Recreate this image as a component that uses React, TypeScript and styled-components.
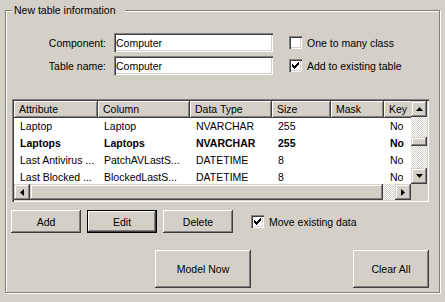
import React from 'react'
import styled, { createGlobalStyle, css } from 'styled-components'

const face = '#d4d0c8'
const shadow = '#808080'
const darkShadow = '#404040'
const highlight = '#ffffff'

const GlobalStyle = createGlobalStyle`
  html, body {
    margin: 0;
    padding: 0;
    background: ${face};
  }

  body {
    font-family: 'Liberation Sans', Arial, sans-serif;
    font-size: 10.5px;
    color: #000;
  }
`

const sunken = css`
  box-shadow: inset 1px 1px 0 ${shadow}, inset 2px 2px 0 ${darkShadow},
    inset -1px -1px 0 ${highlight}, inset -2px -2px 0 ${face};
`

const raised = css`
  box-shadow: inset -1px -1px 0 ${darkShadow}, inset 1px 1px 0 ${highlight},
    inset -2px -2px 0 ${shadow};
`

const scrollRaised = css`
  box-shadow: inset -1px -1px 0 ${darkShadow}, inset 1px 1px 0 ${face},
    inset -2px -2px 0 ${shadow}, inset 2px 2px 0 ${highlight};
`

const hatch = css`
  background: repeating-conic-gradient(${highlight} 0 25%, ${face} 0 50%) 0 0 / 2px 2px;
`

const Window = styled.div`
  width: 445px;
  height: 302px;
  box-sizing: border-box;
  padding: 4px 0 0 5px;
  background: ${face};
`

const GroupBox = styled.fieldset`
  margin: 0;
  padding: 0 0 0 6px;
  width: 435px;
  height: 289px;
  box-sizing: border-box;
  min-inline-size: 0;
  border: 1px solid ${shadow};
  box-shadow: 1px 1px 0 ${highlight}, inset 1px 1px 0 ${highlight};
`

const Caption = styled.legend`
  padding: 0 9px 0 2px;
  line-height: 13px;
  background: ${face};
`

const FormGrid = styled.div`
  display: grid;
  grid-template-columns: 94px 159px auto;
  column-gap: 8px;
  row-gap: 4px;
  align-items: center;
  margin-top: 16px;
`

const FieldLabel = styled.label`
  text-align: right;
`

const TextInput = styled.input`
  width: 159px;
  height: 19px;
  box-sizing: border-box;
  margin: 0;
  padding: 0 2px;
  border: none;
  outline: none;
  background: #fff;
  font: inherit;
  color: #000;
  ${sunken}
`

const CheckRow = styled.label<{ $indent?: number }>`
  display: flex;
  align-items: center;
  gap: 5px;
  margin-left: ${(p) => p.$indent ?? 0}px;
  white-space: nowrap;
`

const Box = styled.span`
  width: 13px;
  height: 13px;
  flex: none;
  box-sizing: border-box;
  padding: 3px;
  background: #fff;
  ${sunken}

  svg {
    display: block;
  }
`

const ListView = styled.div`
  margin-top: 24px;
  width: 417px;
  height: 103px;
  box-sizing: border-box;
  padding: 2px;
  background: #fff;
  ${sunken}
  display: grid;
  grid-template-columns: 1fr 16px;
  grid-template-rows: 1fr 16px;
`

const TableArea = styled.div`
  min-width: 0;
  min-height: 0;
  overflow: hidden;
`

const HeaderRow = styled.div`
  display: flex;
  height: 17px;
`

const HeaderCell = styled.div<{ $w: number }>`
  width: ${(p) => p.$w}px;
  flex: none;
  box-sizing: border-box;
  padding: 0 5px;
  line-height: 17px;
  background: ${face};
  ${raised}
  white-space: nowrap;
  overflow: hidden;
`

const DataRow = styled.div<{ $bold?: boolean }>`
  display: flex;
  height: 17px;
  line-height: 16px;
  font-weight: ${(p) => (p.$bold ? 700 : 400)};
`

const DataCell = styled.div<{ $w: number }>`
  width: ${(p) => p.$w}px;
  flex: none;
  box-sizing: border-box;
  padding: 0 6px;
  white-space: nowrap;
  overflow: hidden;
`

const VScroll = styled.div`
  display: flex;
  flex-direction: column;
`

const HScroll = styled.div`
  display: flex;
`

const Arrow = styled.div`
  width: 16px;
  height: 16px;
  flex: none;
  box-sizing: border-box;
  background: ${face};
  ${scrollRaised}
  display: flex;
  align-items: center;
  justify-content: center;

  svg {
    display: block;
  }
`

const Track = styled.div`
  flex: 1;
  display: flex;
  flex-direction: column;
  ${hatch}
`

const VThumb = styled.div<{ $offset: number }>`
  margin-top: ${(p) => p.$offset}px;
  height: 9px;
  flex: none;
  background: ${face};
  ${scrollRaised}
`

const HThumb = styled.div`
  flex: 1;
  background: ${face};
  ${scrollRaised}
`

const HTrackEnd = styled.div`
  width: 12px;
  flex: none;
  ${hatch}
`

const Corner = styled.div`
  background: ${face};
`

const ButtonRow = styled.div`
  display: flex;
  align-items: center;
  gap: 6px;
  margin: 8px 0 0 -1px;
`

const Button = styled.button<{ $w: number; $h: number; $default?: boolean }>`
  width: ${(p) => p.$w}px;
  height: ${(p) => p.$h}px;
  flex: none;
  box-sizing: border-box;
  margin: 0;
  padding: 0;
  font: inherit;
  color: #000;
  background: ${face};
  border: ${(p) => (p.$default ? '1px solid #000' : 'none')};
  ${raised}
`

const BottomRow = styled.div`
  display: flex;
  justify-content: space-between;
  width: 417px;
  box-sizing: border-box;
  padding-left: 143px;
  margin-top: 17px;
`

const columns = [
  { title: 'Attribute', w: 84 },
  { title: 'Column', w: 92 },
  { title: 'Data Type', w: 82 },
  { title: 'Size', w: 59 },
  { title: 'Mask', w: 53 },
  { title: 'Key', w: 60 },
]

const rows = [
  { cells: ['Laptop', 'Laptop', 'NVARCHAR', '255', '', 'No'] },
  { cells: ['Laptops', 'Laptops', 'NVARCHAR', '255', '', 'No'], bold: true },
  { cells: ['Last Antivirus ...', 'PatchAVLastS...', 'DATETIME', '8', '', 'No'] },
  { cells: ['Last Blocked ...', 'BlockedLastS...', 'DATETIME', '8', '', 'No'] },
]

const CheckBox: React.FC<{ checked?: boolean }> = ({ checked }) => (
  <Box>
    {checked && (
      <svg width='7' height='7' viewBox='0 0 7 7' shapeRendering='crispEdges'>
        <path
          d='M0 2h1v1h1v1h1v-1h1v-1h1v-1h1v-1h1v3h-1v1h-1v1h-1v1h-1v1h-1v-1h-1v-1h-1z'
          fill='#000'
        />
      </svg>
    )}
  </Box>
)

const Triangle: React.FC<{ dir: 'up' | 'down' | 'left' | 'right' }> = ({ dir }) => {
  const vertical = dir === 'up' || dir === 'down'
  const points = {
    up: '3.5,0 7,4 0,4',
    down: '0,0 7,0 3.5,4',
    left: '4,0 4,7 0,3.5',
    right: '0,0 4,3.5 0,7',
  }[dir]
  return (
    <svg
      width={vertical ? 7 : 4}
      height={vertical ? 4 : 7}
      viewBox={vertical ? '0 0 7 4' : '0 0 4 7'}
    >
      <polygon points={points} fill='#000' />
    </svg>
  )
}

const App: React.FC = () => {
  return (
    <>
      <GlobalStyle />
      <Window>
        <GroupBox>
          <Caption>New table information</Caption>

          <FormGrid>
            <FieldLabel>Component:</FieldLabel>
            <TextInput defaultValue='Computer' />
            <CheckRow $indent={8}>
              <CheckBox />
              One to many class
            </CheckRow>

            <FieldLabel>Table name:</FieldLabel>
            <TextInput defaultValue='Computer' />
            <CheckRow $indent={8}>
              <CheckBox checked />
              Add to existing table
            </CheckRow>
          </FormGrid>

          <ListView>
            <TableArea>
              <HeaderRow>
                {columns.map((c) => (
                  <HeaderCell key={c.title} $w={c.w}>
                    {c.title}
                  </HeaderCell>
                ))}
              </HeaderRow>
              {rows.map((r, i) => (
                <DataRow key={i} $bold={r.bold}>
                  {r.cells.map((text, j) => (
                    <DataCell key={j} $w={columns[j].w}>
                      {text}
                    </DataCell>
                  ))}
                </DataRow>
              ))}
            </TableArea>

            <VScroll>
              <Arrow>
                <Triangle dir='up' />
              </Arrow>
              <Track>
                <VThumb $offset={20} />
              </Track>
              <Arrow>
                <Triangle dir='down' />
              </Arrow>
            </VScroll>

            <HScroll>
              <Arrow>
                <Triangle dir='left' />
              </Arrow>
              <HThumb />
              <HTrackEnd />
              <Arrow>
                <Triangle dir='right' />
              </Arrow>
            </HScroll>

            <Corner />
          </ListView>

          <ButtonRow>
            <Button $w={70} $h={23}>Add</Button>
            <Button $w={70} $h={23} $default>Edit</Button>
            <Button $w={70} $h={23}>Delete</Button>
            <CheckRow $indent={12}>
              <CheckBox checked />
              Move existing data
            </CheckRow>
          </ButtonRow>

          <BottomRow>
            <Button $w={96} $h={38}>Model Now</Button>
            <Button $w={76} $h={38}>Clear All</Button>
          </BottomRow>
        </GroupBox>
      </Window>
    </>
  )
}

export default App
